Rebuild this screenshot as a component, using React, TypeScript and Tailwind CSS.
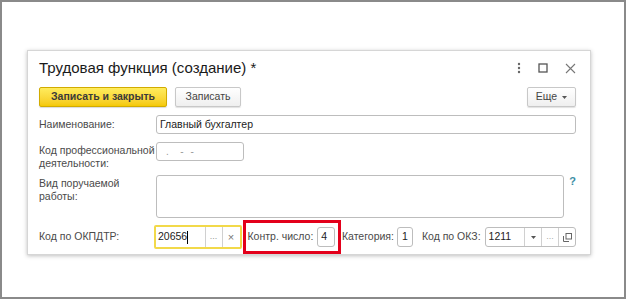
import React from "react";

const font = { fontFamily: '"Liberation Sans", Arial, sans-serif' };

function Label({ children }: { children: React.ReactNode }) {
  return <div className="w-[117px] shrink-0 whitespace-nowrap text-[10.5px] leading-[13px] text-[#4a4a4a]">{children}</div>;
}

export default function App() {
  return (
    <div
      className="w-[626px] h-[299px] bg-white border-2 border-[#8a8a8a] pl-[25px] pt-[48px]"
      style={font}
    >
      <div className="w-[564px] h-[205px] bg-white border border-[#d6d6d6] shadow-[0_1px_4px_rgba(0,0,0,0.25)] pl-[11px] pr-[14px] pt-[6px] flex flex-col">
        {/* Title row */}
        <div className="flex items-center h-[22px]">
          <div className="text-[15px] text-[#1a1a1a] leading-[20px] flex-1 whitespace-nowrap">Трудовая функция (создание) *</div>
          <div className="flex items-center gap-[17px] text-[#666]">
            <svg width="4" height="12" viewBox="0 0 4 12">
              <circle cx="2" cy="2" r="1.2" fill="#666" />
              <circle cx="2" cy="6" r="1.2" fill="#666" />
              <circle cx="2" cy="10" r="1.2" fill="#666" />
            </svg>
            <svg width="10" height="10" viewBox="0 0 10 10">
              <rect x="1" y="1" width="8" height="8" fill="none" stroke="#555" strokeWidth="1.3" />
            </svg>
            <svg width="11" height="11" viewBox="0 0 11 11">
              <path d="M1 1 L10 10 M10 1 L1 10" stroke="#777" strokeWidth="1.1" />
            </svg>
          </div>
        </div>
        {/* Buttons */}
        <div className="flex items-center mt-[8px] h-[20px]">
          <button className="h-[20px] w-[128px] rounded-[2px] border border-[#d1ab00] bg-gradient-to-b from-[#ffec5c] to-[#f5c900] text-[10.5px] font-bold text-[#3a3a3a] shadow-[0_1px_1px_rgba(0,0,0,0.15)] whitespace-nowrap">
            Записать и закрыть
          </button>
          <button className="ml-[8px] h-[20px] w-[66px] rounded-[2px] border border-[#c8c8c8] bg-gradient-to-b from-white to-[#efefef] text-[10.5px] text-[#444] shadow-[0_1px_1px_rgba(0,0,0,0.12)]">
            Записать
          </button>
          <div className="flex-1" />
          <button className="h-[20px] w-[49px] rounded-[2px] border border-[#c8c8c8] bg-gradient-to-b from-white to-[#efefef] text-[10.5px] text-[#444] shadow-[0_1px_1px_rgba(0,0,0,0.12)] flex items-center justify-center gap-[5px]">
            Еще
            <svg width="5" height="3" viewBox="0 0 5 3"><path d="M0 0 H5 L2.5 3 Z" fill="#555" /></svg>
          </button>
        </div>
        {/* Row 1 */}
        <div className="flex items-center mt-[8px]">
          <Label>Наименование:</Label>
          <div className="flex-1 h-[19px] rounded-[3px] border border-[#bdbdbd] bg-white flex items-center px-[3px] text-[10.5px] text-[#222]">
            Главный бухгалтер
          </div>
        </div>
        {/* Row 2 */}
        <div className="flex items-start mt-[8px]">
          <div className="pt-[2px]">
            <Label>
              Код профессиональной
              <br />
              деятельности:
            </Label>
          </div>
          <div className="w-[88px] h-[19px] rounded-[3px] border border-[#bdbdbd] bg-white flex items-center pl-[9px] text-[10px] text-[#999] tracking-[2px]">
            .&nbsp;&nbsp;- -
          </div>
        </div>
        {/* Row 3 */}
        <div className="flex items-start mt-[5px]">
          <div className="pt-[2px]">
            <Label>
              Вид поручаемой
              <br />
              работы:
            </Label>
          </div>
          <div className="w-[410px] h-[43px] rounded-[3px] border border-[#bdbdbd] bg-white" />
          <div className="ml-[5px] text-[11px] font-bold text-[#3b8ea5] leading-[12px]">?</div>
        </div>
        {/* Row 4 */}
        <div className="flex items-center mt-[2px] h-[34px]">
          <div className="w-[115px] shrink-0 whitespace-nowrap text-[10.5px] text-[#4a4a4a]">Код по ОКПДТР:</div>
          <div className="w-[88px] h-[24px] rounded-[2px] border-2 border-[#f2d94a] bg-white flex items-stretch text-[10.5px] text-[#222]">
            <div className="flex-1 flex items-center pl-[2px]">
              20656<span className="inline-block w-[1px] h-[13px] bg-black" />
            </div>
            <div className="w-[17px] border-l border-[#d0d0d0] flex items-center justify-center text-[#999] text-[9px]">...</div>
            <div className="w-[18px] border-l border-[#d0d0d0] flex items-center justify-center text-[#777] text-[11px]">×</div>
          </div>
          <div className="ml-[1px] h-[34px] w-[99px] border-[3px] border-[#e3001b] flex items-center pl-[2px] whitespace-nowrap">
            <span className="text-[10.5px] text-[#4a4a4a]">Контр. число:</span>
            <div className="ml-[4px] w-[18px] h-[20px] rounded-[3px] border border-[#bdbdbd] bg-white flex items-center pl-[3px] text-[10.5px] text-[#222]">4</div>
          </div>
          <span className="ml-[1px] whitespace-nowrap text-[10.5px] text-[#4a4a4a]">Категория:</span>
          <div className="ml-[3px] w-[16px] h-[20px] rounded-[3px] border border-[#bdbdbd] bg-white flex items-center pl-[4px] text-[10.5px] text-[#222]">1</div>
          <span className="ml-[9px] whitespace-nowrap text-[10.5px] text-[#4a4a4a]">Код по ОКЗ:</span>
          <div className="ml-[4px] w-[92px] h-[20px] rounded-[3px] border border-[#bdbdbd] bg-white flex items-stretch text-[10.5px] text-[#222]">
            <div className="flex-1 flex items-center pl-[3px]">1211</div>
            <div className="w-[17px] border-l border-[#d0d0d0] flex items-center justify-center">
              <svg width="5" height="3" viewBox="0 0 5 3"><path d="M0 0 H5 L2.5 3 Z" fill="#555" /></svg>
            </div>
            <div className="w-[17px] border-l border-[#d0d0d0] flex items-center justify-center text-[#aaa] text-[9px]">...</div>
            <div className="w-[17px] border-l border-[#d0d0d0] flex items-center justify-center">
              <svg width="9" height="9" viewBox="0 0 9 9">
                <rect x="3" y="0.5" width="5.5" height="5.5" fill="none" stroke="#666" strokeWidth="1" />
                <path d="M0.5 3 V8.5 H6" fill="none" stroke="#666" strokeWidth="1" />
              </svg>
            </div>
          </div>
        </div>
      </div>
    </div>
  );
}
